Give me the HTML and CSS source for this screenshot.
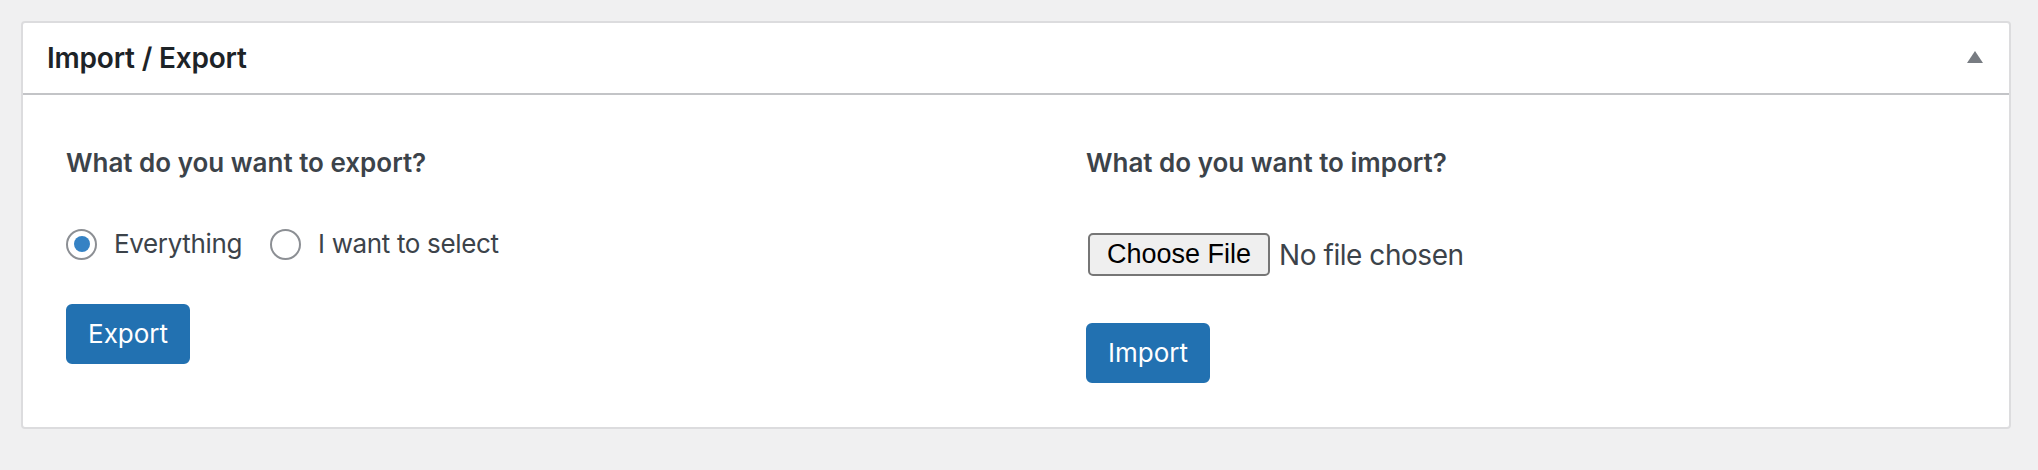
FILE: index.html
```html
<!DOCTYPE html>
<html lang="en">
<head>
<meta charset="utf-8">
<title>Import / Export</title>
<link rel="stylesheet" href="styles.css">
</head>
<body>
<div class="wrap">
  <div class="postbox">
    <div class="postbox-header">
      <h2 class="hndle">Import / Export</h2>
      <span class="toggle">
        <svg width="16" height="12" viewBox="0 0 16 12"><polygon points="8,0 16,12 0,12" fill="#787c82"/></svg>
      </span>
    </div>
    <div class="inside">
      <div class="col col-export">
        <h3 class="q">What do you want to export?</h3>
        <div class="radios">
          <label class="radio-opt"><span class="radio checked"></span><span class="radio-label">Everything</span></label>
          <label class="radio-opt"><span class="radio"></span><span class="radio-label">I want to select</span></label>
        </div>
        <button class="btn btn-export" type="button">Export</button>
      </div>
      <div class="col col-import">
        <h3 class="q">What do you want to import?</h3>
        <div class="file-row">
          <button class="file-btn" type="button">Choose File</button>
          <span class="file-name">No file chosen</span>
        </div>
        <button class="btn btn-import" type="button">Import</button>
      </div>
    </div>
  </div>
</div>
</body>
</html>
```
FILE: styles.css
```css
html, body {
  margin: 0;
  padding: 0;
  background: #f0f0f1;
}
body {
  font-family: Inter, "Noto Sans", "Liberation Sans", sans-serif;
  color: #3c434a;
}
.wrap {
  padding: 21px 27px 0 21px;
}
.postbox {
  background: #fff;
  border: 2px solid #dcdcde;
  border-radius: 4px;
}
.postbox-header {
  display: flex;
  align-items: center;
  justify-content: space-between;
  border-bottom: 2px solid #c3c4c7;
}
.hndle {
  margin: 0;
  padding: 16px 24px;
  font-size: 28px;
  line-height: 38px;
  font-weight: 600;
  letter-spacing: -0.2px;
  color: #1d2327;
}
.toggle {
  display: flex;
  margin-right: 26px;
  margin-top: -2px;
}
.inside {
  display: grid;
  grid-template-columns: 1020px 1fr;
  padding: 50px 43px 44px 43px;
}
.col {
  display: flex;
  flex-direction: column;
  align-items: flex-start;
}
.q {
  margin: 0;
  font-size: 26px;
  line-height: 36px;
  font-weight: 600;
  color: #3c434a;
}
.radios {
  display: flex;
  align-items: center;
  height: 36px;
  margin-top: 45px;
  gap: 28px;
}
.radio-opt {
  display: flex;
  align-items: center;
  gap: 17px;
}
.radio {
  box-sizing: border-box;
  width: 31px;
  height: 31px;
  border: 2px solid #8c8f94;
  border-radius: 50%;
  display: flex;
  align-items: center;
  justify-content: center;
  background: #fff;
}
.radio.checked::after {
  content: "";
  width: 16px;
  height: 16px;
  border-radius: 50%;
  background: #3582c4;
}
.radio-label {
  font-size: 26px;
  line-height: 36px;
  letter-spacing: -0.35px;
  color: #3c434a;
}
.btn {
  box-sizing: border-box;
  height: 60px;
  padding: 0 20px;
  border: 2px solid #2271b1;
  border-radius: 6px;
  background: #2271b1;
  color: #fff;
  font-family: Inter, "Noto Sans", "Liberation Sans", sans-serif;
  font-size: 26px;
  line-height: 56px;
}
.btn-export {
  margin-top: 42px;
}
.file-row {
  display: flex;
  align-items: center;
  margin-top: 52px;
  margin-left: 2px;
  gap: 9px;
}
.file-btn {
  box-sizing: border-box;
  height: 43px;
  padding: 0 17px;
  border: 2px solid #767676;
  border-radius: 5px;
  background: #efefef;
  color: #000;
  font-family: "Liberation Sans", Arial, sans-serif;
  font-size: 27px;
  line-height: 39px;
}
.file-name {
  font-size: 28px;
  line-height: 36px;
  letter-spacing: -0.45px;
  color: #3c434a;
}
.btn-import {
  margin-top: 47px;
}
```
